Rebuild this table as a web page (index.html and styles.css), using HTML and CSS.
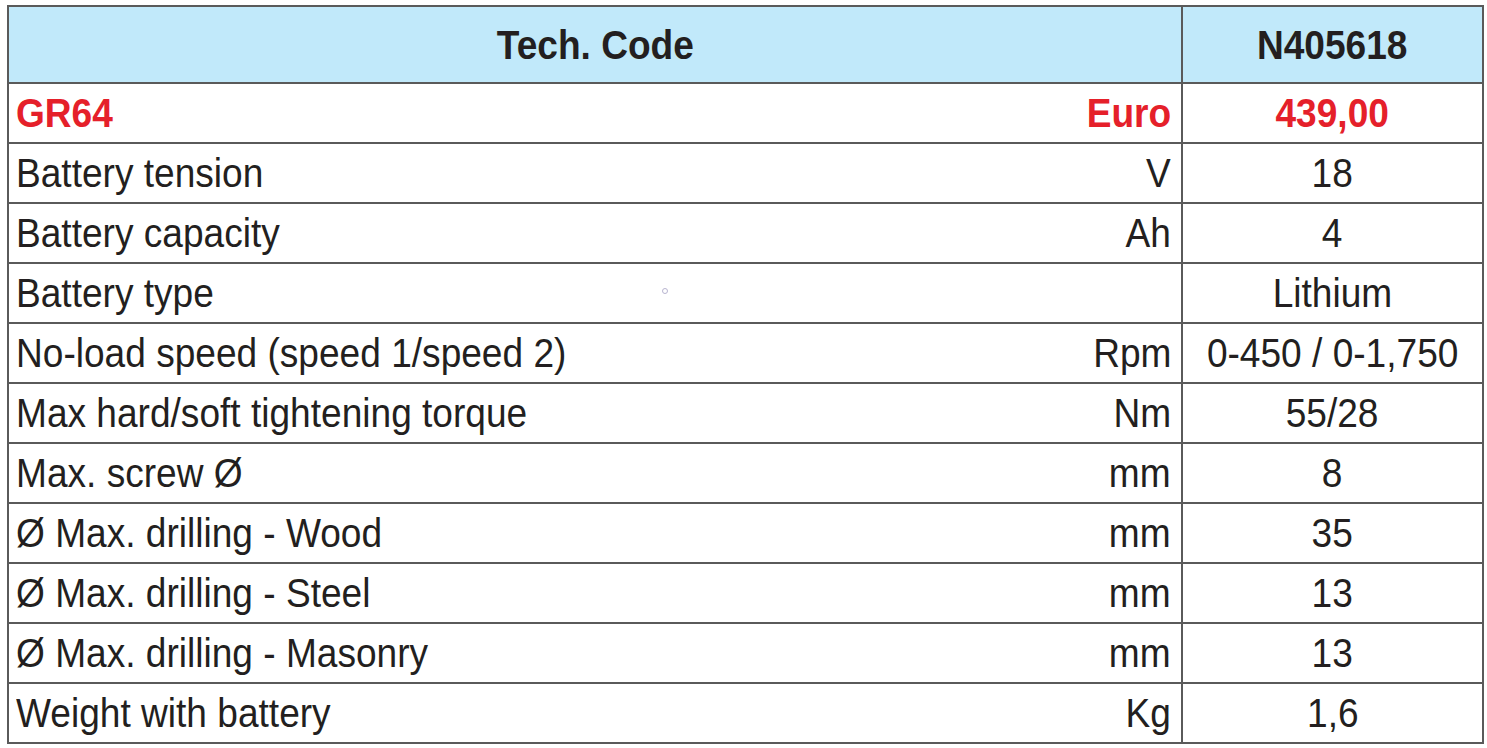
FILE: index.html
```html
<!DOCTYPE html>
<html>
<head>
<meta charset="utf-8">
<link rel="stylesheet" href="styles.css">
</head>
<body>
<div class="wrap">
<table class="spec">
  <colgroup><col class="c-label"><col class="c-unit"><col class="c-val"></colgroup>
  <thead>
    <tr class="head"><th colspan="2"><span class="t">Tech. Code</span></th><th><span class="t">N405618</span></th></tr>
  </thead>
  <tbody>
    <tr class="price"><td class="label"><span class="t">GR64</span></td><td class="unit"><span class="t">Euro</span></td><td class="val"><span class="t">439,00</span></td></tr>
    <tr><td class="label"><span class="t">Battery tension</span></td><td class="unit"><span class="t">V</span></td><td class="val"><span class="t">18</span></td></tr>
    <tr><td class="label"><span class="t">Battery capacity</span></td><td class="unit"><span class="t">Ah</span></td><td class="val"><span class="t">4</span></td></tr>
    <tr><td class="label"><span class="t">Battery type</span><span class="dot"></span></td><td class="unit"></td><td class="val"><span class="t">Lithium</span></td></tr>
    <tr><td class="label"><span class="t">No-load speed (speed 1/speed 2)</span></td><td class="unit"><span class="t">Rpm</span></td><td class="val"><span class="t">0-450 / 0-1,750</span></td></tr>
    <tr><td class="label"><span class="t">Max hard/soft tightening torque</span></td><td class="unit"><span class="t">Nm</span></td><td class="val"><span class="t">55/28</span></td></tr>
    <tr><td class="label"><span class="t">Max. screw Ø</span></td><td class="unit"><span class="t">mm</span></td><td class="val"><span class="t">8</span></td></tr>
    <tr><td class="label"><span class="t">Ø Max. drilling - Wood</span></td><td class="unit"><span class="t">mm</span></td><td class="val"><span class="t">35</span></td></tr>
    <tr><td class="label"><span class="t">Ø Max. drilling - Steel</span></td><td class="unit"><span class="t">mm</span></td><td class="val"><span class="t">13</span></td></tr>
    <tr><td class="label"><span class="t">Ø Max. drilling - Masonry</span></td><td class="unit"><span class="t">mm</span></td><td class="val"><span class="t">13</span></td></tr>
    <tr><td class="label"><span class="t">Weight with battery</span></td><td class="unit"><span class="t">Kg</span></td><td class="val"><span class="t">1,6</span></td></tr>
  </tbody>
</table>
</div>
</body>
</html>
```

FILE: styles.css
```css
html, body {
  margin: 0;
  padding: 0;
  background: #ffffff;
}
.wrap {
  padding: 5px 0 0 7px;
}
.spec {
  border-collapse: collapse;
  width: 1475px;
  table-layout: fixed;
  font-family: "Liberation Sans", Arial, sans-serif;
  font-size: 40px;
  color: #231f20;
}
.c-label { width: 1000px; }
.c-unit { width: 174px; }
.c-val { width: 301px; }
.spec th, .spec td {
  border: 2px solid #5a5a5a;
  padding: 0;
  line-height: 1;
  white-space: nowrap;
}
.t {
  display: inline-block;
  transform: scaleX(0.927);
  transform-origin: center;
}
.head th {
  background: #c1e9fa;
  height: 75px;
  font-weight: bold;
  text-align: center;
  vertical-align: middle;
}
.spec tbody tr td {
  height: 58px;
  vertical-align: middle;
}
.spec td.label {
  border-right: none;
  padding-left: 7px;
  text-align: left;
  position: relative;
}
.spec td.label .t {
  transform-origin: left center;
}
.spec td.unit {
  border-left: none;
  text-align: right;
  padding-right: 10px;
}
.spec td.unit .t {
  transform-origin: right center;
}
.spec td.val {
  text-align: center;
}
.price td {
  color: #e5202a;
  font-weight: bold;
}
.dot {
  position: absolute;
  left: 653px;
  top: 24px;
  width: 4px;
  height: 4px;
  border: 1px solid #b8b4d0;
  border-radius: 50%;
}
```
